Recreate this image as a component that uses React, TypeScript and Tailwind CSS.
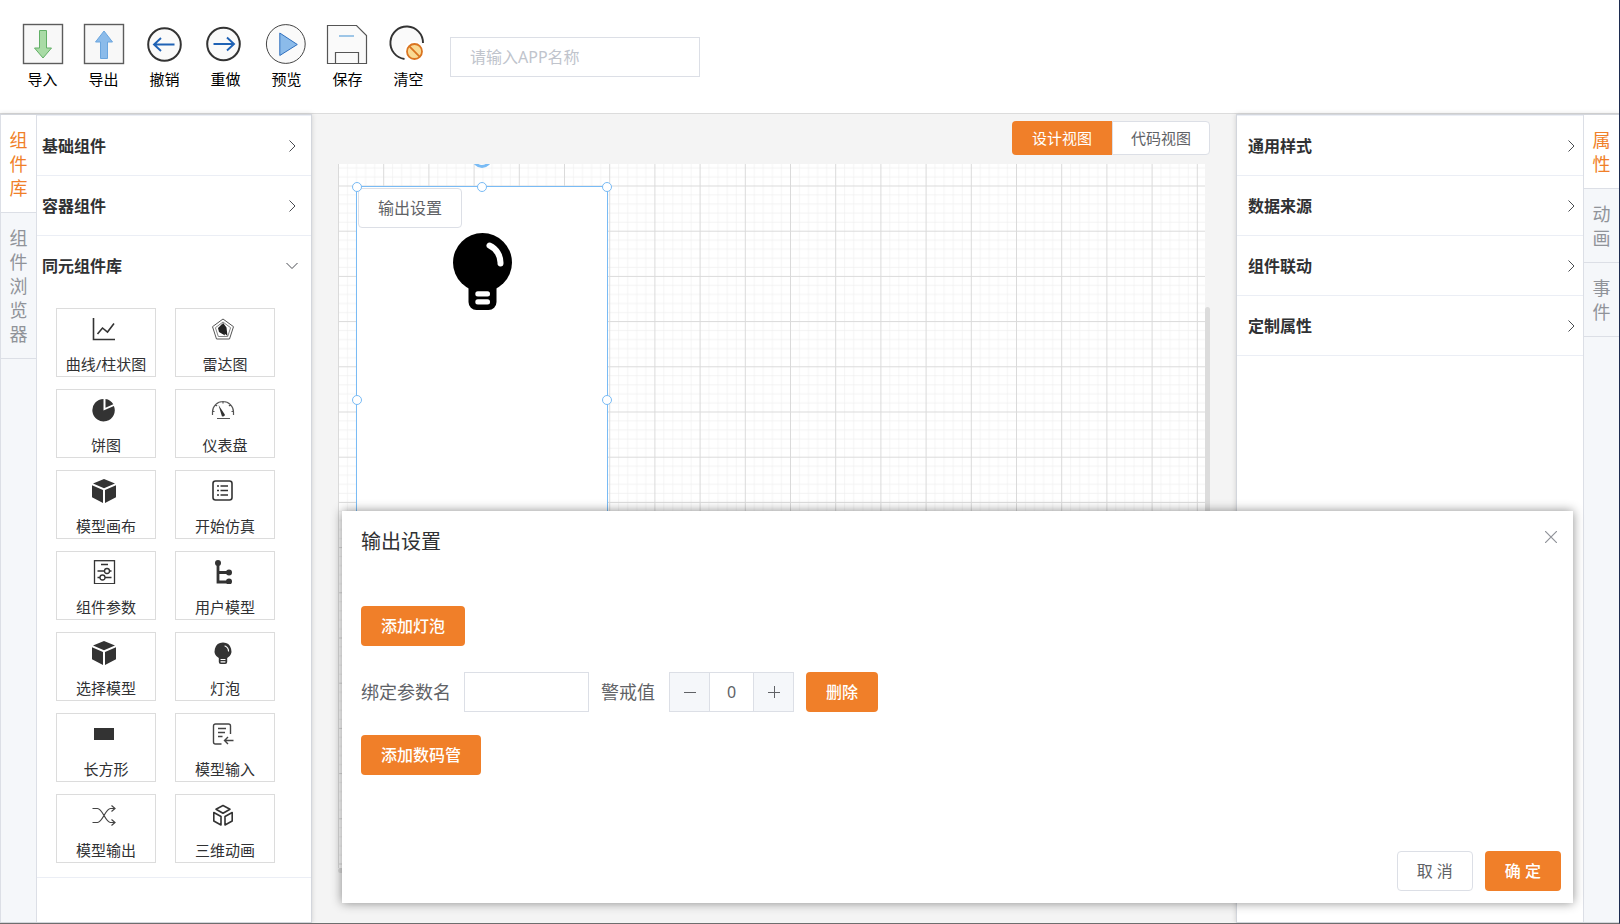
import { useState } from 'react';
import type { ReactNode } from 'react';

const toolbar: { label: string; icon: ReactNode }[] = [
  {
    label: '导入',
    icon: (
      <>
        <rect x="0.5" y="0.5" width="39" height="39" fill="#f8f8f8" stroke="#5c5c5c" strokeWidth="1.4" />
        <path d="M16.5 6.5h7v17.5h5L20 34l-8.5-10h5z" fill="#a9dba6" stroke="#62b067" />
      </>
    ),
  },
  {
    label: '导出',
    icon: (
      <>
        <rect x="0.5" y="0.5" width="39" height="39" fill="#f8f8f8" stroke="#5c5c5c" strokeWidth="1.4" />
        <path d="M16.5 34.5h7V18h5L20 7l-8.5 11h5z" fill="#8bbbea" stroke="#6aa5de" />
      </>
    ),
  },
  {
    label: '撤销',
    icon: (
      <>
        <circle cx="19.5" cy="20.5" r="16.3" fill="#fafafa" stroke="#333" strokeWidth="2" />
        <path d="M29.5 20.5H9.5M16 14l-7 6.5 7 6.5" fill="none" stroke="#1f62b5" strokeWidth="1.9" />
      </>
    ),
  },
  {
    label: '重做',
    icon: (
      <>
        <circle cx="17.5" cy="20" r="16.3" fill="#fafafa" stroke="#333" strokeWidth="2" />
        <path d="M7.5 20h20M21 13.5l7 6.5-7 6.5" fill="none" stroke="#1f62b5" strokeWidth="1.9" />
      </>
    ),
  },
  {
    label: '预览',
    icon: (
      <>
        <circle cx="18.8" cy="20" r="19.4" fill="#fafafa" stroke="#444" />
        <path d="M12.8 9v22.5l17.5-11z" fill="#8bbbea" stroke="#2f6fbe" />
      </>
    ),
  },
  {
    label: '保存',
    icon: (
      <g transform="translate(-1 0)">
        <path d="M0.5 1.5H29.5L39.5 11.5V39.5H0.5z" fill="#fafafa" stroke="#555" strokeWidth="1.2" />
        <path d="M8.5 39.5V28.5H31.5V39.5" fill="none" stroke="#555" strokeWidth="1.2" />
        <path d="M12 12h15" stroke="#7fb5e0" strokeWidth="1.5" />
      </g>
    ),
  },
  {
    label: '清空',
    icon: (
      <g transform="translate(-1 0)">
        <circle cx="19" cy="19" r="16" fill="#fafafa" />
        <path d="M16.5 35A16.3 16.3 0 1 1 35 19" fill="none" stroke="#333" strokeWidth="1.9" />
        <circle cx="26.5" cy="27.5" r="10.5" fill="#fff" />
        <circle cx="26.5" cy="27.5" r="7.5" fill="#f9da94" stroke="#da7420" strokeWidth="1.8" />
        <path d="M21.2 22.2l10.6 10.6" stroke="#da7420" strokeWidth="1.8" />
      </g>
    ),
  },
];

const cubeIcon = (
  <path d="M12 0l11 4.6-11 4.6L1 4.6zM0 6.2l11 4.7V24L0 18.2zM24 6.2l-11 4.7V24l11-5.8z" fill="#333" />
);

const components: { label: string; icon: ReactNode }[] = [
  {
    label: '曲线/柱状图',
    icon: <path d="M1.5 1v21.5H23M5.5 17l5-6 5 4 6.5-8.5" fill="none" stroke="#333" strokeWidth="1.6" />,
  },
  {
    label: '雷达图',
    icon: (
      <>
        <path d="M12 2l10.5 7.7-4 12.3h-13L1.5 9.7z" fill="none" stroke="#555" />
        <path d="M12 5l7.6 5.7-2.9 8.8H7.3L4.4 10.7z" fill="none" stroke="#777" strokeWidth="0.9" />
        <path d="M11.8 5.5V15l4.7 4-1-8.500zM11.5 6.500L7 11l1 4 6 3.5z" fill="#222" />
      </>
    ),
  },
  {
    label: '饼图',
    icon: <path d="M11.5 1v11.5l10.4-4.6A11.2 11.2 0 1 1 11.5 1zM13.5 1a11 11 0 0 1 7.8 5.2l-7.8 3.6z" fill="#333" />,
  },
  {
    label: '仪表盘',
    icon: (
      <>
        <path d="M1.5 17v-3a10.5 10.5 0 0 1 21 0v3M6 20.5h13M12 3v2.5M4.5 6.5l1.5 1.5M19.5 6.5L18 8M1.5 13.5h2M20.5 13.5h2" fill="none" stroke="#555" strokeWidth="1.2" />
        <path d="M7.5 7l5.8 8.8a1.6 1.6 0 1 1-2.8 1.2z" fill="#333" />
      </>
    ),
  },
  { label: '模型画布', icon: cubeIcon },
  {
    label: '开始仿真',
    icon: (
      <>
        <rect x="2" y="2" width="19" height="19" rx="2.5" fill="none" stroke="#333" strokeWidth="1.6" />
        <path d="M6 7h2M9.5 7H17M6 11.5h2M9.5 11.5H17M6 16h2M9.5 16H17" stroke="#333" strokeWidth="1.4" />
      </>
    ),
  },
  {
    label: '组件参数',
    icon: (
      <g fill="none" stroke="#333" strokeWidth="1.3">
        <rect x="2.5" y="0.7" width="20" height="23" />
        <path d="M9 4.5h7M5.5 11h7M17.5 11h2M5.5 17.5h2.5M13 17.5h6.5" />
        <circle cx="15" cy="11" r="2.5" />
        <circle cx="10.5" cy="17.5" r="2.5" />
      </g>
    ),
  },
  {
    label: '用户模型',
    icon: (
      <>
        <path d="M7 3v19h11M7 12.5h11" fill="none" stroke="#333" strokeWidth="2.8" />
        <circle cx="7" cy="3" r="3" fill="#333" />
        <circle cx="18" cy="12.5" r="3" fill="#333" />
        <circle cx="18" cy="21.5" r="3" fill="#333" />
      </>
    ),
  },
  { label: '选择模型', icon: cubeIcon },
  {
    label: '灯泡',
    icon: (
      <>
        <path d="M12 1.500a8.300 8.300 0 0 1 4.200 15.500v4a2 2 0 0 1-2 2h-4.400a2 2 0 0 1-2-2v-4A8.300 8.300 0 0 1 12 1.500z" fill="#333" />
        <path d="M14 5a5.500 5.500 0 0 1 3.500 5M10 18.500h4M10 20.800h4" fill="none" stroke="#fff" strokeWidth="1.2" strokeLinecap="round" />
      </>
    ),
  },
  { label: '长方形', icon: <rect x="2" y="6" width="20" height="12" fill="#333" /> },
  {
    label: '模型输入',
    icon: (
      <path d="M10.5 22H4.5a2 2 0 0 1-2-2V4a2 2 0 0 1 2-2h13a2 2 0 0 1 2 2v8M7 6.5h8M7 10.5h7M7 14.5h4.5M22.5 18.5h-9M17 15l-3.5 3.5L17 22" fill="none" stroke="#444" strokeWidth="1.4" />
    ),
  },
  {
    label: '模型输出',
    icon: (
      <path d="M0.5 5.5h5c5 0 8 14 13 14h4M0.5 19.5h5c5 0 8-14 13-14h4M19.5 2.5l3.500 3-3.500 3M19.5 16.5l3.500 3-3.500 3" fill="none" stroke="#444" strokeWidth="1.2" />
    ),
  },
  {
    label: '三维动画',
    icon: (
      <path d="M12 2.5l7 3.7-7 4-7-4zM2.800 9.500l7.200 4V22l-7.200-4zM21.200 9.500l-7.200 4V22l7.200-4z" fill="none" stroke="#333" strokeWidth="1.6" strokeLinejoin="round" />
    ),
  },
];

function Chevron({ open = false }: { open?: boolean }) {
  return (
    <svg className={open ? 'w-3 h-3' : 'w-[7px] h-3'} viewBox={open ? '0 0 12 12' : '0 0 7 12'} fill="none" stroke="#4a4d52">
      <path d={open ? 'M0.5 3l5.5 5.5L11.5 3' : 'M0.5 0.5L6 6l-5.5 5.5'} />
    </svg>
  );
}

function PanelHeader({ title, open = false, className }: { title: string; open?: boolean; className: string }) {
  return (
    <button
      type="button"
      aria-expanded={open}
      className={`flex h-[60px] w-full items-center justify-between text-base font-bold text-[#303133] ${open ? '' : 'border-b border-[#ebeef5]'} ${className}`}
    >
      {title}
      <Chevron open={open} />
    </button>
  );
}

function SideTabs({ tabs }: { tabs: string[] }) {
  const [active, setActive] = useState(tabs[0]);
  return (
    <div role="tablist" aria-orientation="vertical" className="flex w-[37px] shrink-0 flex-col border-x border-[#dcdfe6] bg-[#f5f7fa]">
      {tabs.map((tab) => (
        <button
          key={tab}
          type="button"
          role="tab"
          aria-selected={tab === active}
          onClick={() => setActive(tab)}
          className={`flex justify-center border-b border-[#dcdfe6] pt-[13px] pb-3 text-lg leading-6 ${tab === active ? 'bg-white text-[#f07f29]' : 'text-[#909399]'}`}
        >
          <span className="w-[18px] break-all">{tab}</span>
        </button>
      ))}
    </div>
  );
}

function PrimaryButton({ children }: { children: ReactNode }) {
  return (
    <button type="button" className="h-10 rounded bg-[#f07f29] px-5 text-base font-medium text-white">
      {children}
    </button>
  );
}

// resize handles of the selected component
const handles = [
  '-left-[5px] -top-[5px]',
  'left-[120px] -top-[5px]',
  '-right-[5px] -top-[5px]',
  '-left-[5px] top-[208px]',
  '-right-[5px] top-[208px]',
];

function Canvas() {
  return (
    <div className="relative min-h-0 flex-1 pr-[5px] pb-[5px]">
      <div className="relative h-full overflow-hidden bg-white">
        <svg className="absolute inset-0 h-full w-full">
          <defs>
            <pattern id="minor" width="9.04" height="9.04" patternUnits="userSpaceOnUse">
              <path d="M9.04 0H0V9.04" fill="none" stroke="#eeeeee" strokeWidth="1.2" />
            </pattern>
            <pattern id="major" width="45.2" height="45.2" y="21.5" patternUnits="userSpaceOnUse">
              <rect width="45.2" height="45.2" fill="url(#minor)" />
              <path d="M45.2 0H0V45.2" fill="none" stroke="#dadada" strokeWidth="2" />
            </pattern>
          </defs>
          <rect width="100%" height="100%" fill="url(#major)" />
        </svg>
        <div className="absolute left-[18px] top-[22px] h-[427px] w-[252px] border border-[#79bbf5] bg-white">
          <button type="button" className="absolute left-px top-px h-10 rounded border border-[#dcdfe6] bg-white px-[19px] text-base text-[#606266]">
            输出设置
          </button>
          <svg className="absolute left-[96px] top-[46px] h-[78px] w-[59px]" viewBox="0 0 59 78">
            <circle cx="29.5" cy="29.5" r="29.5" />
            <path d="M15.5 50h28v19a8 8 0 0 1-8 8h-12a8 8 0 0 1-8-8z" />
            <path d="M36.5 12.5a19 19 0 0 1 11 18" fill="none" stroke="#fff" strokeWidth="6" strokeLinecap="round" />
            <rect x="22.3" y="58.2" width="14.7" height="5.3" rx="2.5" fill="#fff" />
            <rect x="22.3" y="66.2" width="14.7" height="5.3" rx="2.5" fill="#fff" />
          </svg>
          <span className="absolute left-[115px] -top-[39px] h-5 w-5 rounded-full border-3 border-[#79bbf5]" />
          {handles.map((pos) => (
            <span key={pos} className={`absolute h-2.5 w-2.5 rounded-full border border-[#79bbf5] bg-white ${pos}`} />
          ))}
        </div>
      </div>
      <span className="absolute right-0 top-[143px] bottom-[60px] w-[5px] rounded-full bg-[#dcdcdc]" />
      <span className="absolute bottom-0 left-0 h-[5px] w-1/2 rounded-full bg-[#dcdcdc]" />
    </div>
  );
}

function OutputDialog() {
  const [count, setCount] = useState(0);
  return (
    <div
      role="dialog"
      aria-labelledby="dialog-title"
      className="absolute bottom-5 left-[342px] right-[46px] z-10 flex h-[392px] flex-col bg-white px-[19px] shadow-[0_0_10px_rgba(0,0,0,0.45)]"
    >
      <div className="flex items-start justify-between">
        <h2 id="dialog-title" className="pt-4 text-xl leading-[30px] text-[#303133]">输出设置</h2>
        <button type="button" aria-label="关闭" className="mt-[18px] -mr-[5px] p-0.5">
          <svg className="h-3 w-3" viewBox="0 0 12 12" stroke="#909399" strokeWidth="1.2">
            <path d="M0 0l12 12M12 0L0 12" />
          </svg>
        </button>
      </div>
      <div className="mt-[49px] flex flex-1 flex-col items-start">
        <PrimaryButton>添加灯泡</PrimaryButton>
        <div className="mt-[26px] mb-[23px] flex items-center gap-3 text-lg text-[#606266]">
          <label htmlFor="param" className="mr-px">绑定参数名</label>
          <input id="param" type="text" className="h-10 w-[125px] border border-[#dcdfe6] px-3 text-base outline-none" />
          <label htmlFor="limit" className="mr-0.5">警戒值</label>
          <div className="flex h-10 w-[125px] border border-[#dcdfe6]">
            <button type="button" aria-label="减少" onClick={() => setCount(count - 1)} className="flex w-10 items-center justify-center border-r border-[#dcdfe6] bg-[#f5f7fa]">
              <svg className="h-3 w-3" viewBox="0 0 12 12" stroke="#606266"><path d="M0 6.5h12" /></svg>
            </button>
            <input
              id="limit"
              type="text"
              value={count}
              onChange={(e) => setCount(Number(e.target.value) || 0)}
              className="min-w-0 flex-1 text-center text-base outline-none"
            />
            <button type="button" aria-label="增加" onClick={() => setCount(count + 1)} className="flex w-10 items-center justify-center border-l border-[#dcdfe6] bg-[#f5f7fa]">
              <svg className="h-3 w-3" viewBox="0 0 12 12" stroke="#606266"><path d="M0 6.5h12M6.5 0v12" /></svg>
            </button>
          </div>
          <PrimaryButton>删除</PrimaryButton>
        </div>
        <PrimaryButton>添加数码管</PrimaryButton>
      </div>
      <div className="flex justify-end gap-3 pb-3 -mr-[7px]">
        <button type="button" className="h-10 rounded border border-[#dcdfe6] bg-white px-[19px] text-base text-[#606266]">取 消</button>
        <PrimaryButton>确 定</PrimaryButton>
      </div>
    </div>
  );
}

export default function App() {
  const [view, setView] = useState('design');
  return (
    <div className="relative flex h-screen flex-col overflow-hidden border-b border-r border-b-[#6e6e6e] border-r-[#1c2b50] bg-[#f4f4f4] font-['Noto_Sans','Noto_Sans_CJK_SC',sans-serif]">
      <header className="flex h-[114px] shrink-0 items-center border-b border-[#dcdcdc] bg-white pl-3">
        {toolbar.map((item) => (
          <button key={item.label} type="button" className="flex w-[61px] flex-col items-center gap-[5px] text-[15px] leading-5 text-black">
            <svg className="h-10 w-10 overflow-visible" viewBox="0 0 40 40">{item.icon}</svg>
            {item.label}
          </button>
        ))}
        <input
          type="text"
          aria-label="APP名称"
          placeholder="请输入APP名称"
          className="ml-[11px] h-10 w-[250px] border border-[#dcdfe6] px-[19px] text-base outline-none placeholder:text-[#c0c4cc]"
        />
      </header>

      <div className="flex min-h-0 flex-1">
        {/* Component library */}
        <aside className="flex w-[312px] shrink-0 border-y border-r border-[#d3d6dc] bg-white shadow-[0_0_5px_rgba(0,0,0,0.15)]">
          <SideTabs tabs={['组件库', '组件浏览器']} />
          <div className="flex-1 border-t border-[#ebeef5]">
            <PanelHeader title="基础组件" className="pl-[5px] pr-[15px]" />
            <PanelHeader title="容器组件" className="pl-[5px] pr-[15px]" />
            <PanelHeader title="同元组件库" open className="pl-[5px] pr-[13px]" />
            <div className="grid grid-cols-[100px_100px] gap-x-[19px] gap-y-3 border-b border-[#ebeef5] pl-[19px] pt-3 pb-3.5">
              {components.map((item) => (
                <button
                  key={item.label}
                  type="button"
                  className="flex h-[69px] flex-col items-center justify-between border border-[#dcdcdc] pt-2 pb-0.5 text-[15px] leading-5 text-[#303133]"
                >
                  <svg className="mr-[5px] h-6 w-6" viewBox="0 0 24 24">{item.icon}</svg>
                  {item.label}
                </button>
              ))}
            </div>
          </div>
        </aside>

        {/* Design area */}
        <main className="flex min-w-0 flex-1 flex-col pl-[26px] pr-[26px] pt-[7px] pb-[50px]">
          <div className="mb-[9px] flex h-[34px] shrink-0 justify-end text-[15px]">
            <button type="button" onClick={() => setView('design')} className={`rounded-l px-5 ${view === 'design' ? 'bg-[#f07f29] text-white' : 'border border-[#dcdfe6] bg-white text-[#606266]'}`}>
              设计视图
            </button>
            <button type="button" onClick={() => setView('code')} className={`rounded-r px-[18px] ${view === 'code' ? 'bg-[#f07f29] text-white' : 'border border-[#dcdfe6] bg-white text-[#606266]'}`}>
              代码视图
            </button>
          </div>
          <Canvas />
        </main>

        {/* Properties */}
        <aside className="-mr-px flex w-[384px] shrink-0 border-y border-l border-[#d3d6dc] bg-white shadow-[0_0_5px_rgba(0,0,0,0.15)]">
          <div className="flex-1 border-t border-[#ebeef5]">
            {['通用样式', '数据来源', '组件联动', '定制属性'].map((title) => (
              <PanelHeader key={title} title={title} className="pl-[11px] pr-2" />
            ))}
          </div>
          <SideTabs tabs={['属性', '动画', '事件']} />
        </aside>
      </div>

      <OutputDialog />
    </div>
  );
}
